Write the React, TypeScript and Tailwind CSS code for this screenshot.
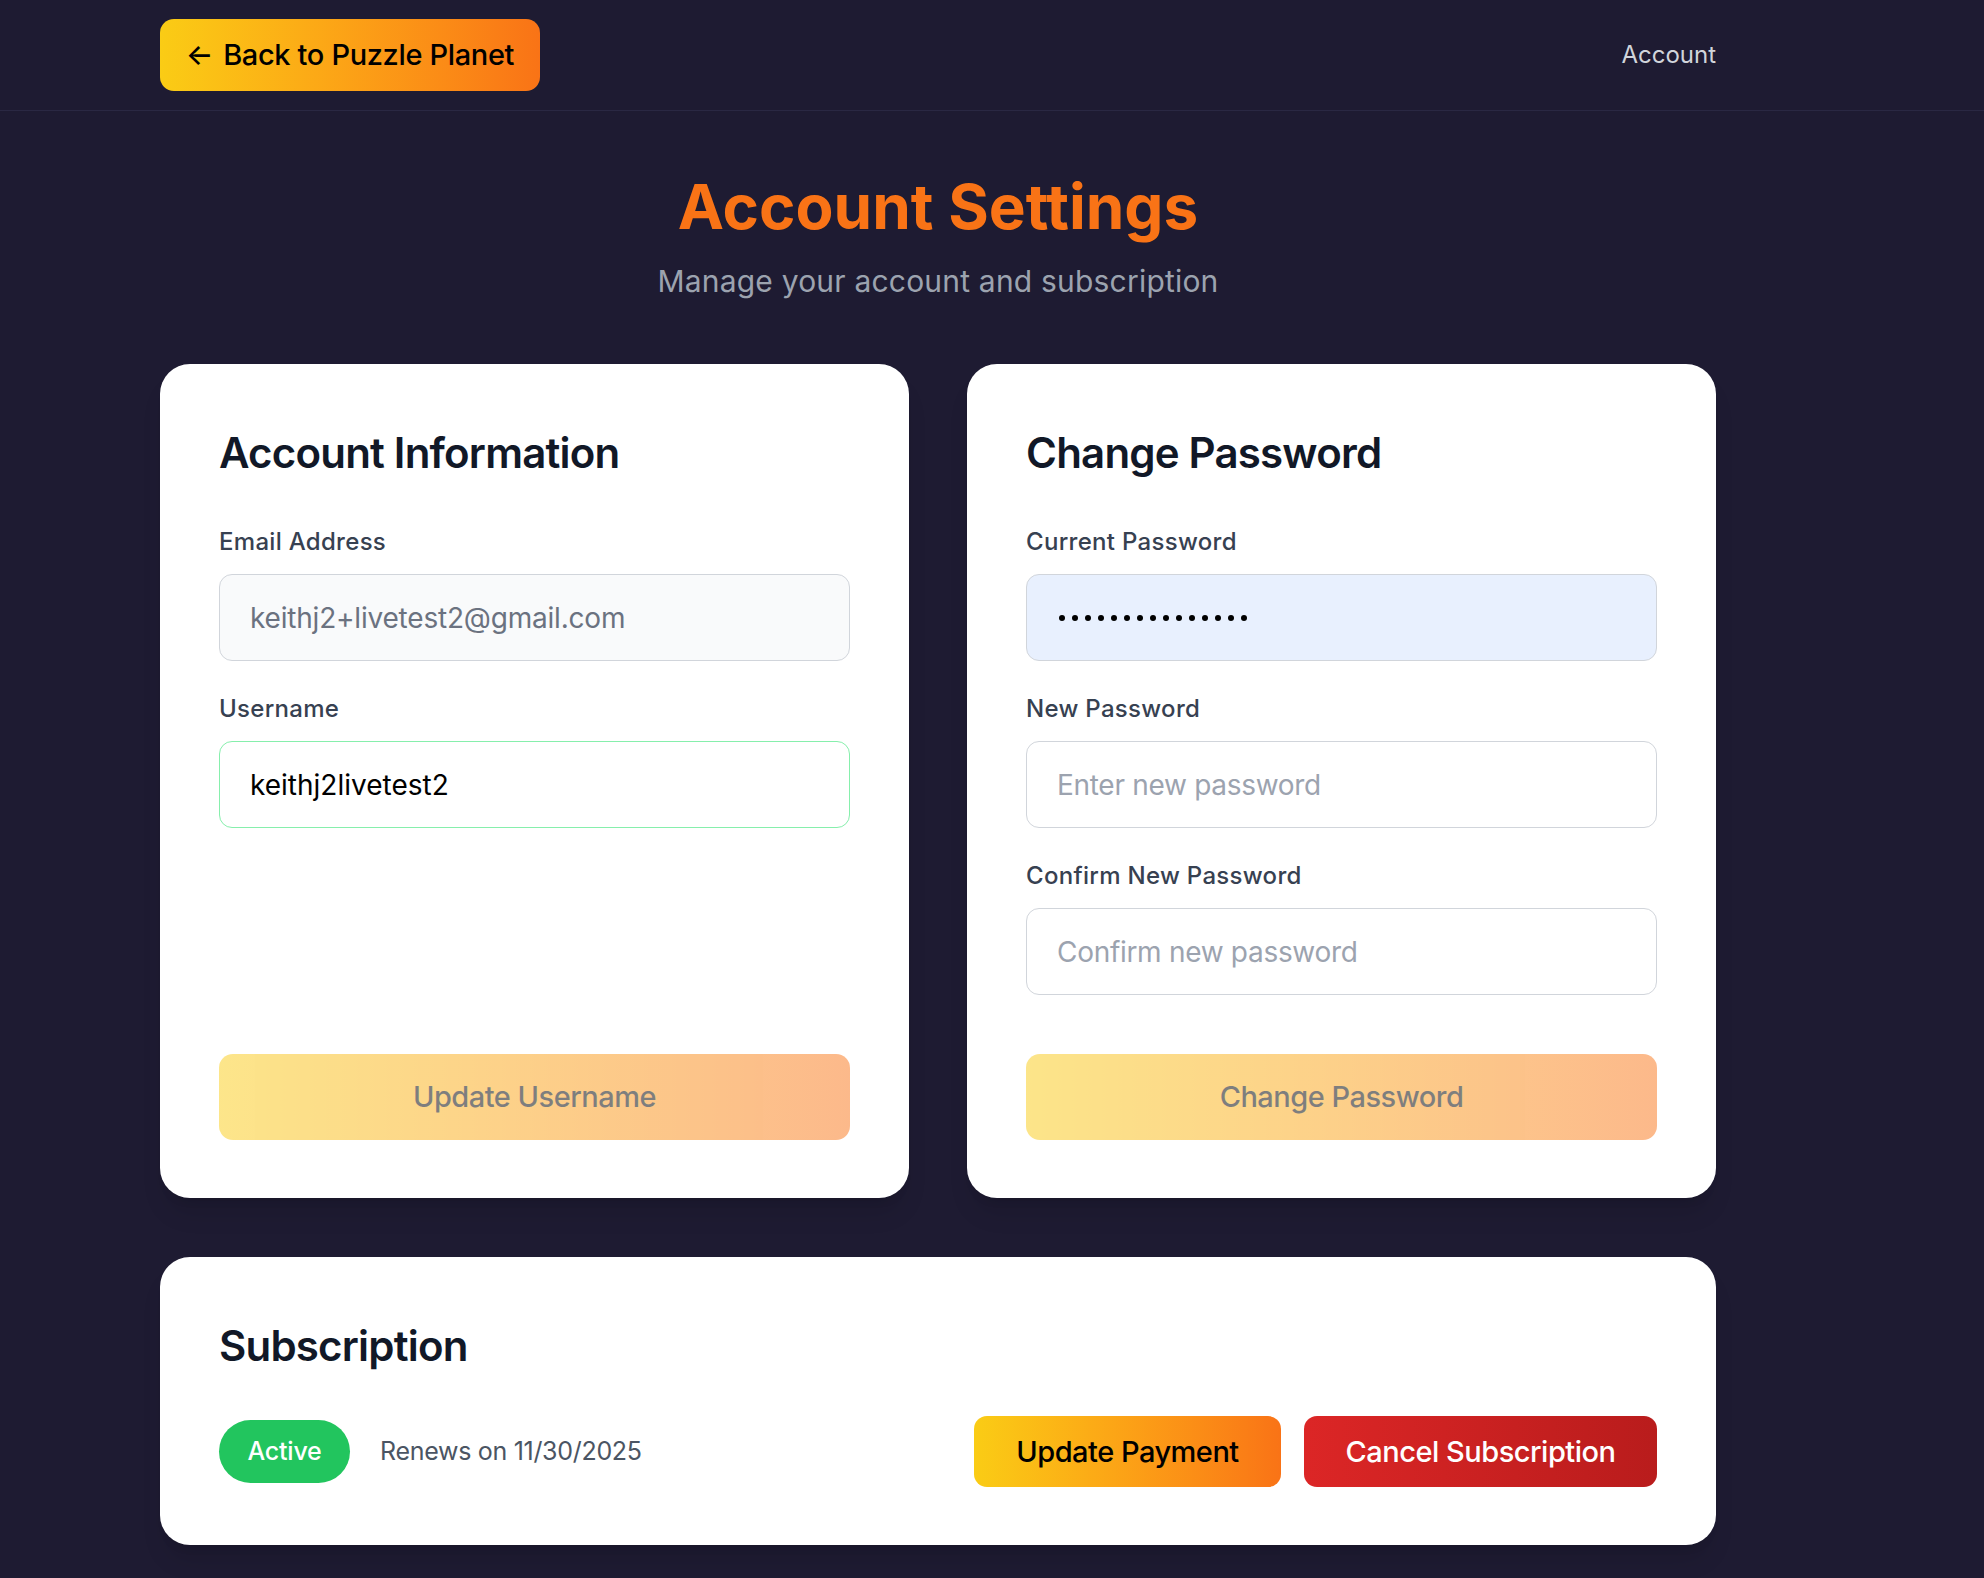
import React from "react";

function Label({ children }: { children: React.ReactNode }) {
  return (
    <div className="text-[24px] leading-[32px] font-medium tracking-[0.3px] text-[#374151] mb-[16px]">
      {children}
    </div>
  );
}

function FadedButton({ children }: { children: React.ReactNode }) {
  return (
    <button className="w-full h-[86px] rounded-[14px] bg-linear-to-r from-[#facc15] to-[#f97316] opacity-50 text-black text-[29px] font-medium tracking-[-0.5px] cursor-not-allowed">
      {children}
    </button>
  );
}

export default function App() {
  const dots = Array.from({ length: 15 });
  return (
    <div className="min-h-screen bg-[#1e1b32] font-['Inter','Noto_Sans',sans-serif] pb-[40px]">
      <header className="border-b border-[#2a2843]">
        <div className="ml-[160px] w-[1556px] h-[110px] flex items-center justify-between">
          <button className="w-[380px] h-[72px] rounded-[14px] bg-linear-to-r from-[#facc15] to-[#f97316] text-black text-[29px] font-medium tracking-[-0.35px] flex items-center justify-center gap-[10px]">
            <span>←</span>
            <span>Back to Puzzle Planet</span>
          </button>
          <a className="text-[24px] text-[#d1d5db]">Account</a>
        </div>
      </header>

      <main className="ml-[160px] w-[1556px] pt-[65px]">
        <h1 className="text-[62px] leading-[62px] font-bold text-[#f97316] text-center">
          Account Settings
        </h1>
        <p className="mt-[23px] text-[30px] leading-[40px] tracking-[0.2px] text-[#9ca3af] text-center">
          Manage your account and subscription
        </p>

        <div className="mt-[63px] grid grid-cols-2 gap-[58px]">
          <section className="bg-white rounded-[30px] pt-[61px] pb-[58px] px-[59px] flex flex-col shadow-xl">
            <h2 className="text-[42px] leading-[56px] font-semibold tracking-[-0.8px] text-[#111827] mb-[45px]">
              Account Information
            </h2>
            <Label>Email Address</Label>
            <input
              readOnly
              value="keithj2+livetest2@gmail.com"
              className="w-full h-[87px] rounded-[13px] border border-[#d1d5db] bg-[#f9fafb] pl-[30px] text-[28px] tracking-[-0.2px] text-[#6b7280] outline-none"
            />
            <div className="h-[32px]" />
            <Label>Username</Label>
            <input
              readOnly
              value="keithj2livetest2"
              className="w-full h-[87px] rounded-[13px] border border-[#86efac] bg-white pl-[30px] text-[28px] text-black outline-none"
            />
            <div className="flex-1 min-h-[59px]" />
            <FadedButton>Update Username</FadedButton>
          </section>

          <section className="bg-white rounded-[30px] pt-[61px] pb-[58px] px-[59px] flex flex-col shadow-xl">
            <h2 className="text-[42px] leading-[56px] font-semibold tracking-[-0.8px] text-[#111827] mb-[45px]">
              Change Password
            </h2>
            <Label>Current Password</Label>
            <div className="w-full h-[87px] rounded-[13px] border border-[#d1d5db] bg-[#e8f0fe] pl-[32px] flex items-center gap-[7px]">
              {dots.map((_, i) => (
                <span key={i} className="w-[6px] h-[6px] rounded-full bg-black" />
              ))}
            </div>
            <div className="h-[32px]" />
            <Label>New Password</Label>
            <input
              readOnly
              placeholder="Enter new password"
              className="w-full h-[87px] rounded-[13px] border border-[#d1d5db] bg-white pl-[30px] text-[28px] tracking-[-0.3px] text-black placeholder:text-[#9ca3af] outline-none"
            />
            <div className="h-[32px]" />
            <Label>Confirm New Password</Label>
            <input
              readOnly
              placeholder="Confirm new password"
              className="w-full h-[87px] rounded-[13px] border border-[#d1d5db] bg-white pl-[30px] text-[28px] tracking-[-0.3px] text-black placeholder:text-[#9ca3af] outline-none"
            />
            <div className="flex-1 min-h-[59px]" />
            <FadedButton>Change Password</FadedButton>
          </section>
        </div>

        <section className="mt-[59px] bg-white rounded-[30px] pt-[61px] pb-[58px] px-[59px] shadow-xl">
          <h2 className="text-[42px] leading-[56px] font-semibold tracking-[-0.8px] text-[#111827] mb-[42px]">
            Subscription
          </h2>
          <div className="h-[71px] flex items-center justify-between">
            <div className="flex items-center">
              <span className="w-[131px] h-[63px] rounded-full bg-[#22c55e] text-white text-[25px] font-medium tracking-[-0.2px] flex items-center justify-center">
                Active
              </span>
              <span className="ml-[30px] text-[25px] tracking-[-0.3px] text-[#4b5563]">
                Renews on 11/30/2025
              </span>
            </div>
            <div className="flex items-center gap-[23px]">
              <button className="w-[307px] h-[71px] rounded-[13px] bg-linear-to-r from-[#facc15] to-[#f97316] text-black text-[29px] font-medium tracking-[-0.5px]">
                Update Payment
              </button>
              <button className="w-[353px] h-[71px] rounded-[13px] bg-linear-to-r from-[#dc2626] to-[#b91c1c] text-white text-[29px] font-medium tracking-[-0.5px]">
                Cancel Subscription
              </button>
            </div>
          </div>
        </section>
      </main>
    </div>
  );
}
